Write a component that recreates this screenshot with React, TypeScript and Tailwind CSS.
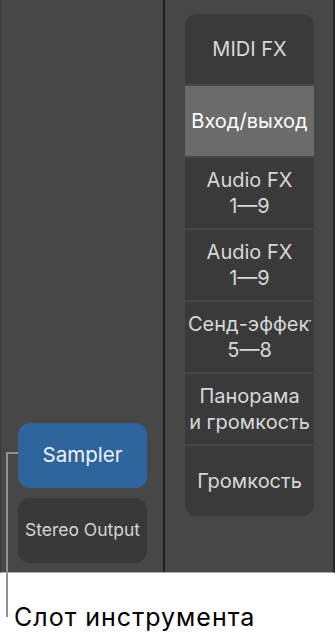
import React from "react";

const slots: { lines: string[]; active?: boolean }[] = [
  { lines: ["MIDI FX"] },
  { lines: ["Вход/выход"], active: true },
  { lines: ["Audio FX", "1—9"] },
  { lines: ["Audio FX", "1—9"] },
  { lines: ["Сенд-эффекты", "5—8"] },
  { lines: ["Панорама", "и громкость"] },
  { lines: ["Громкость"] },
];

export default function App() {
  return (
    <div
      className="relative w-[335px] h-[638px] bg-white overflow-hidden"
      style={{ fontFamily: "Inter, 'Noto Sans', sans-serif" }}
    >
      {/* mixer strip */}
      <div className="flex h-[573px] bg-[#474747] border-l border-l-[#3a3a3a] border-r-2 border-r-[#262626] border-b border-b-[#a9a9a9]">
        {/* channel strip */}
        <div className="w-[162px] flex flex-col justify-end gap-[10px] pb-[9px] pl-[17px]">
          <div className="w-[129px] h-[65px] rounded-[12px] bg-[#2f659d] flex items-center justify-center text-[20.5px] text-[#eef2f7]">
            Sampler
          </div>
          <div className="w-[129px] h-[65px] rounded-[12px] bg-[#393939] flex items-center justify-center text-[17.5px] text-[#d6d6d6]">
            Stereo Output
          </div>
        </div>

        <div className="w-[2px] bg-[#1f1f1f]" />

        {/* inspector column */}
        <div className="flex-1 pt-[14px] pl-[20px]">
          <div className="w-[129px] flex flex-col gap-[2px] rounded-[12px] overflow-hidden">
            {slots.map((s, i) => (
              <div
                key={i}
                className={`h-[70px] flex flex-col justify-center px-[3px] overflow-hidden text-center whitespace-nowrap text-[20px] leading-[26px] ${
                  s.active ? "bg-[#6b6b6b] text-white" : "bg-[#3a3a3a] text-[#d8d8d8]"
                }`}
              >
                {s.lines.map((l, j) => (
                  <div key={j} className="overflow-hidden">
                    {l}
                  </div>
                ))}
              </div>
            ))}
          </div>
        </div>
      </div>

      {/* callout */}
      <div className="absolute left-[6px] top-[452px] w-[1.5px] h-[165px] bg-[#929292]" />
      <div className="absolute left-[6px] top-[452px] w-[12px] h-[1.5px] bg-[#929292]" />
      <div className="pl-[14px] pt-[30px] text-[25px] leading-[28px] tracking-[1px] text-black">
        Слот инструмента
      </div>
    </div>
  );
}
